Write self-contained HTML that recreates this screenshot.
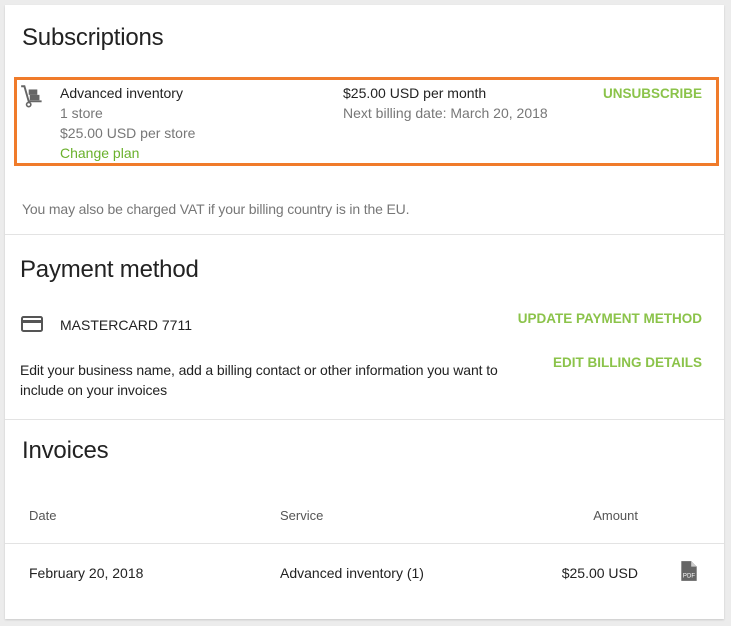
<!DOCTYPE html>
<html><head><meta charset="utf-8"><style>
*{margin:0;padding:0;box-sizing:border-box}
body{width:731px;height:626px;background:#ececec;font-family:"Liberation Sans",Roboto,sans-serif;position:relative;overflow:hidden;color:#333}
.card{position:absolute;left:5px;top:5px;width:719px;height:614px;background:#fff;box-shadow:0 1px 2px rgba(0,0,0,.15)}
.a{position:absolute;white-space:nowrap}
h2{position:absolute;font-weight:400;font-size:24px;color:#222;letter-spacing:-.2px}
.t{font-size:14px;color:#222}
.g{font-size:14px;color:#777}
.gr{font-size:14px;color:#6ab12c}
.btn{font-size:13.5px;font-weight:bold;color:#8bc34a;letter-spacing:0}
.hr{position:absolute;left:0;width:719px;height:1px;background:#e3e3e3}
.box{position:absolute;left:9px;top:72px;width:705px;height:89px;border:3px solid #f07b2a}
.th{font-size:13px;color:#555}
</style></head><body>
<div class="card">
<h2 style="left:17px;top:19px">Subscriptions</h2>
<div class="box"></div>
<svg class="a" style="left:14px;top:78px" width="28" height="28" viewBox="0 0 26 26"><path d="M2 3h3l4 14h12" fill="none" stroke="#666" stroke-width="1.8"/><rect x="9" y="6" width="8" height="5" fill="#666"/><rect x="10" y="11" width="9" height="5" fill="#666"/><circle cx="9" cy="20" r="2" fill="none" stroke="#666" stroke-width="1.5"/></svg>
<div class="a t" style="left:55px;top:80px">Advanced inventory</div>
<div class="a g" style="left:55px;top:100px">1 store</div>
<div class="a g" style="left:55px;top:120px">$25.00 USD per store</div>
<div class="a gr" style="left:55px;top:140px">Change plan</div>
<div class="a t" style="left:338px;top:80px">$25.00 USD per month</div>
<div class="a g" style="left:338px;top:100px">Next billing date: March 20, 2018</div>
<div class="a btn" style="right:22px;top:81px">UNSUBSCRIBE</div>
<div class="a g" style="left:17px;top:196px;letter-spacing:-.15px">You may also be charged VAT if your billing country is in the EU.</div>
<div class="hr" style="top:229px"></div>
<h2 style="left:15px;top:251px">Payment method</h2>
<svg class="a" style="left:16px;top:311px" width="22" height="16" viewBox="0 0 22 16"><rect x="1" y="1" width="20" height="14" rx="1.5" fill="none" stroke="#555" stroke-width="2"/><rect x="1" y="4" width="20" height="3" fill="#555"/></svg>
<div class="a t" style="left:55px;top:312px">MASTERCARD 7711</div>
<div class="a btn" style="right:22px;top:306px">UPDATE PAYMENT METHOD</div>
<div class="a t" style="left:15px;top:355px;line-height:20px;white-space:normal;width:500px;letter-spacing:-.1px">Edit your business name, add a billing contact or other information you want to include on your invoices</div>
<div class="a btn" style="right:22px;top:350px">EDIT BILLING DETAILS</div>
<div class="hr" style="top:414px"></div>
<h2 style="left:17px;top:432px">Invoices</h2>
<div class="a th" style="left:24px;top:503px">Date</div>
<div class="a th" style="left:275px;top:503px">Service</div>
<div class="a th" style="right:86px;top:503px">Amount</div>
<div class="hr" style="top:538px"></div>
<div class="a t" style="left:24px;top:560px">February 20, 2018</div>
<div class="a t" style="left:275px;top:560px">Advanced inventory (1)</div>
<div class="a t" style="right:86px;top:560px">$25.00 USD</div>
<svg class="a" style="left:675px;top:555px" width="18" height="22" viewBox="0 0 16 20"><path d="M1 1h9l5 5v13H1z" fill="#666"/><path d="M10 1v5h5" fill="#ccc"/><text x="8" y="16" font-size="5.5" fill="#fff" text-anchor="middle" font-family="Liberation Sans">PDF</text></svg>
</div>
</body></html>
